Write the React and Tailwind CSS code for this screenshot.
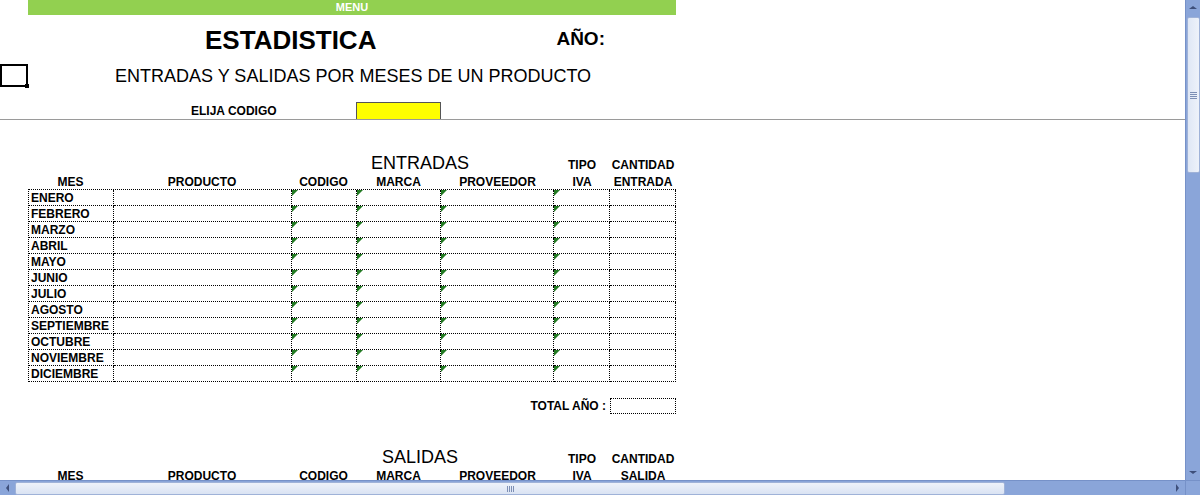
import React from 'react';

const cols = ['w-[85px]', 'w-[178px]', 'w-[65px]', 'w-[85px]', 'w-[113px]', 'w-[56px]', 'w-[66px]'];
const meses = ['ENERO', 'FEBRERO', 'MARZO', 'ABRIL', 'MAYO', 'JUNIO', 'JULIO', 'AGOSTO', 'SEPTIEMBRE', 'OCTUBRE', 'NOVIEMBRE', 'DICIEMBRE'];
const flagged = [2, 3, 4, 5];

const Flag = () => (
    <span className="absolute left-0 top-0 w-0 h-0 border-t-[6px] border-r-[6px] border-t-[#227a22] border-r-transparent"></span>
);

const Headers = ({ title, last }) => (
    <div className="ml-[28px] w-[648px] font-bold text-[12px] leading-[14px]">
        <div className="flex h-[20px] items-end">
            <div className="w-[258px]"></div>
            <div className="w-[268px] text-center font-normal text-[18px] leading-[20px] mb-[1px]">{title}</div>
            <div className="w-[56px] text-center mb-[2px]">TIPO</div>
            <div className="w-[66px] text-center mb-[2px]">CANTIDAD</div>
        </div>
        <div className="flex h-[15px] items-end">
            {['MES', 'PRODUCTO', 'CODIGO', 'MARCA', 'PROVEEDOR', 'IVA', last].map((h, i) => (
                <div key={i} className={`${cols[i]} text-center`}>{h}</div>
            ))}
        </div>
    </div>
);

const Tabla = () => (
    <div className="ml-[28px] w-[648px] border-t border-l border-dotted border-black text-[12px] font-bold">
        {meses.map((m) => (
            <div key={m} className="flex h-[16px]">
                {cols.map((c, i) => (
                    <div key={i} className={`${c} relative h-[16px] border-r border-b border-dotted border-black leading-[16px] px-[2px]`}>
                        {i === 0 && m}
                        {flagged.includes(i) && <Flag />}
                    </div>
                ))}
            </div>
        ))}
    </div>
);

const ScrollV = () => (
    <div className="w-[15px] h-[480px] bg-[#8aa5d9] border-l border-[#7691c8] flex flex-col items-center">
        <div className="h-[15px] w-full flex items-center justify-center">
            <div className="w-0 h-0 border-l-[4px] border-r-[4px] border-b-[3px] border-l-transparent border-r-transparent border-b-[#3e4f7a]"></div>
        </div>
        <div className="mt-[2px] w-[13px] h-[156px] bg-gradient-to-r from-[#dfe7f5] to-[#eef2fa] border border-[#9fb2d8] rounded-[2px] flex flex-col items-center justify-center gap-[1px]">
            <div className="w-[7px] h-px bg-[#7d8fb5]"></div>
            <div className="w-[7px] h-px bg-[#7d8fb5]"></div>
            <div className="w-[7px] h-px bg-[#7d8fb5]"></div>
            <div className="w-[7px] h-px bg-[#7d8fb5]"></div>
        </div>
        <div className="flex-1"></div>
        <div className="h-[15px] w-full flex items-center justify-center">
            <div className="w-0 h-0 border-l-[4px] border-r-[4px] border-t-[3px] border-l-transparent border-r-transparent border-t-[#3e4f7a]"></div>
        </div>
    </div>
);

const ScrollH = () => (
    <div className="flex h-[15px] bg-[#8aa5d9] border-t border-[#7691c8]">
        <div className="w-[15px] h-full flex items-center justify-center">
            <div className="w-0 h-0 border-t-[4px] border-b-[4px] border-r-[3px] border-t-transparent border-b-transparent border-r-[#3e4f7a]"></div>
        </div>
        <div className="w-[990px] h-[13px] mt-px bg-gradient-to-b from-[#eef2fa] to-[#dae3f3] border border-[#9fb2d8] rounded-[2px] flex items-center justify-center gap-[1px]">
            <div className="w-px h-[6px] bg-[#7d8fb5]"></div>
            <div className="w-px h-[6px] bg-[#7d8fb5]"></div>
            <div className="w-px h-[6px] bg-[#7d8fb5]"></div>
            <div className="w-px h-[6px] bg-[#7d8fb5]"></div>
        </div>
        <div className="flex-1"></div>
        <div className="w-[15px] h-full flex items-center justify-center">
            <div className="w-0 h-0 border-t-[4px] border-b-[4px] border-l-[3px] border-t-transparent border-b-transparent border-l-[#3e4f7a]"></div>
        </div>
        <div className="w-[15px] h-full bg-[#8aa5d9] border-l border-[#7691c8]"></div>
    </div>
);

export default function App() {
    return (
        <div className="w-[1200px] h-[495px] overflow-hidden bg-white text-black" style={{ fontFamily: '"Liberation Sans", Arial, sans-serif' }}>
            <div className="flex h-[480px]">
                <div className="flex-1 h-full overflow-hidden">
                    <div className="ml-[28px] w-[648px] h-[15px] bg-[#92d050] text-white font-bold text-[11px] leading-[15px] text-center">MENU</div>
                    <div className="flex h-[45px] items-center">
                        <div className="ml-[205px] text-[26px] font-bold leading-[30px] mt-[4px]">ESTADISTICA</div>
                        <div className="ml-[180px] text-[19px] font-bold leading-[22px] mt-[2px]">AÑO:</div>
                    </div>
                    <div className="flex h-[30px] items-center">
                        <div className="relative w-[28px] h-[23px] border-2 border-black">
                            <span className="absolute right-[-3px] bottom-[-3px] w-[4px] h-[4px] bg-black"></span>
                        </div>
                        <div className="ml-[87px] text-[18px] leading-[20px] mt-[2px]">ENTRADAS Y SALIDAS POR MESES DE UN PRODUCTO</div>
                    </div>
                    <div className="flex h-[30px] items-end border-b border-[#9a9a9a]">
                        <div className="ml-[191px] w-[165px] text-[12px] font-bold leading-[14px] mb-[1px]">ELIJA CODIGO</div>
                        <div className="w-[85px] h-[17px] bg-[#ffff00] border-l border-t border-r border-[#555]"></div>
                    </div>
                    <div className="h-[34px]"></div>
                    <Headers title="ENTRADAS" last="ENTRADA" />
                    <Tabla />
                    <div className="flex mt-[16px] h-[16px] items-center">
                        <div className="w-[606px] text-right text-[12px] font-bold">TOTAL AÑO :</div>
                        <div className="ml-[4px] w-[66px] h-[16px] border border-dotted border-black"></div>
                    </div>
                    <div className="h-[34px]"></div>
                    <Headers title="SALIDAS" last="SALIDA" />
                </div>
                <ScrollV />
            </div>
            <ScrollH />
        </div>
    );
}
